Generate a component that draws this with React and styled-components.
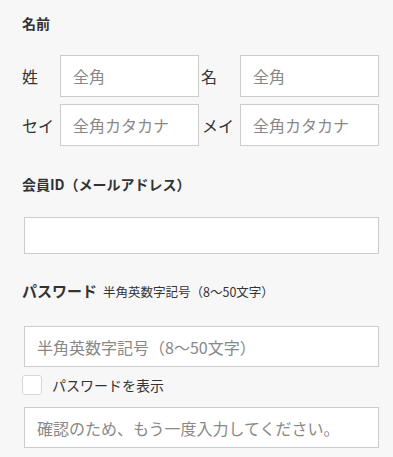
import React from "react";
import styled, { createGlobalStyle } from "styled-components";

const Global = createGlobalStyle`
  html, body { margin: 0; padding: 0; background: #f7f7f7; }
  body {
    font-family: "Noto Sans CJK JP", "Noto Sans", sans-serif;
    color: #333;
  }
  * { box-sizing: border-box; }
`;

const Form = styled.form`
  display: flex;
  flex-direction: column;
  padding: 13px 14px 0 22px;
`;

const Title = styled.div`
  font-size: 14px;
  font-weight: 700;
  line-height: 20px;
  margin-top: ${(p) => p.$mt || 0}px;
  display: flex;
  align-items: baseline;
  white-space: nowrap;
`;

const BigTitle = styled.span`
  font-size: 15px;
  font-weight: 700;
`;

const Note = styled.span`
  font-size: 12.5px;
  font-weight: 400;
  margin-left: 6px;
  color: #333;
`;

const NameGrid = styled.div`
  display: grid;
  grid-template-columns: 38px 139px 41px 139px;
  grid-auto-rows: 42px;
  row-gap: 7px;
  margin-top: 22px;
  align-items: center;
`;

const Label = styled.span`
  font-size: 16px;
  line-height: 20px;
  color: #333;
  white-space: nowrap;
  margin-left: ${(p) => p.$ml || 0}px;
`;

const Input = styled.input`
  display: block;
  width: 100%;
  height: ${(p) => p.$h || 42}px;
  border: 1px solid #cccccc;
  background: #fff;
  border-radius: 0;
  padding: 0 12px;
  font-family: inherit;
  font-size: 16px;
  color: #333;
  outline: none;
  &::placeholder { color: #888; opacity: 1; }
`;

const Field = styled.div`
  margin-top: ${(p) => p.$mt || 0}px;
  margin-left: 2px;
`;

const CheckRow = styled.label`
  display: flex;
  align-items: center;
  gap: 10px;
  margin-top: 8px;
  height: 20px;
  font-size: 14px;
  color: #333;
`;

const Box = styled.span`
  width: 20px;
  height: 20px;
  border: 1px solid #d6d6d6;
  border-radius: 3px;
  background: #fff;
  flex: none;
`;

export default function App() {
  return (
    <>
      <Global />
      <Form onSubmit={(e) => e.preventDefault()}>
        <Title>名前</Title>
        <NameGrid>
          <Label>姓</Label>
          <Input placeholder="全角" />
          <Label $ml={2}>名</Label>
          <Input placeholder="全角" />
          <Label>セイ</Label>
          <Input placeholder="全角カタカナ" />
          <Label $ml={3}>メイ</Label>
          <Input placeholder="全角カタカナ" />
        </NameGrid>

        <Title $mt={28}>会員ID（メールアドレス）</Title>
        <Field $mt={23}>
          <Input $h={37} type="email" />
        </Field>

        <Title $mt={27}>
          <BigTitle>パスワード</BigTitle>
          <Note>半角英数字記号（8〜50文字）</Note>
        </Title>
        <Field $mt={24}>
          <Input $h={41} type="password" placeholder="半角英数字記号（8〜50文字）" />
        </Field>
        <CheckRow>
          <Box />
          パスワードを表示
        </CheckRow>
        <Field $mt={12}>
          <Input $h={41} type="password" placeholder="確認のため、もう一度入力してください。" />
        </Field>
      </Form>
    </>
  );
}
